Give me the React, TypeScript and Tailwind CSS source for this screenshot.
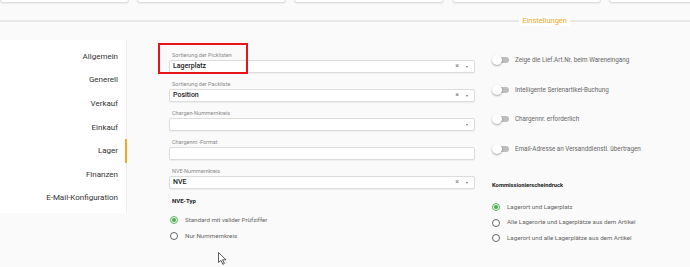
import React from "react";

const menu = ["Allgemein", "Generell", "Verkauf", "Einkauf", "Lager", "Finanzen", "E-Mail-Konfiguration"];

interface FieldProps {
  label: string;
  value?: string;
  clear?: boolean;
  caret?: boolean;
}

function Field({ label, value, clear, caret }: FieldProps) {
  return (
    <div className="flex flex-col">
      <div className="h-[8px] pl-[3px] text-[5.5px] leading-[8px] text-[#8a8a8a]">{label}</div>
      <div className="mt-px flex h-[13px] items-center rounded-[2px] border border-[#dcdcdc] bg-white pl-[3px] pr-[6px] shadow-[0_1px_1px_rgba(0,0,0,0.05)]">
        <span className="flex-1 text-[7px] font-medium leading-none text-[#222]">{value}</span>
        {clear && <span className="mr-[7px] text-[7px] leading-none text-[#777]">×</span>}
        {caret && (
          <span className="h-0 w-0 border-x-[1.5px] border-t-[2px] border-x-transparent border-t-[#777]" />
        )}
      </div>
    </div>
  );
}

function Radio({ label, checked }: { label: string; checked?: boolean }) {
  return (
    <div className="flex h-[10px] items-center">
      <span
        className={`flex h-[8px] w-[8px] items-center justify-center rounded-full border ${
          checked ? "border-[#66bb6a] bg-[#e8f5e9]" : "border-[#666] bg-white"
        }`}
      >
        {checked && <span className="h-[4px] w-[4px] rounded-full bg-[#4caf50]" />}
      </span>
      <span className="ml-[7px] text-[6.2px] leading-none text-[#666]">{label}</span>
    </div>
  );
}

function Toggle({ label }: { label: string }) {
  return (
    <div className="flex h-[12px] items-center">
      <span className="relative flex h-[10px] w-[17px] items-center">
        <span className="ml-[2px] h-[6px] w-[15px] rounded-full bg-[#bdbdbd]" />
        <span className="absolute left-0 top-0 h-[10px] w-[10px] rounded-full bg-white shadow-[0_1px_2px_rgba(0,0,0,0.35)]" />
      </span>
      <span className="ml-[6px] text-[6.3px] leading-none text-[#666]">{label}</span>
    </div>
  );
}

export default function App() {
  return (
    <div className="relative h-[267px] w-[690px] overflow-hidden bg-[#fafafa] font-['Roboto',sans-serif]">
      {/* top cards, mostly scrolled out */}
      <div className="-mt-[17px] flex gap-[8px]">
        {[129, 149, 150, 149, 150].map((w, i) => (
          <div
            key={i}
            style={{ width: w }}
            className="h-[20px] shrink-0 rounded-b-[3px] border border-[#dedede] bg-white shadow-[0_1px_1px_rgba(0,0,0,0.06)]"
          />
        ))}
      </div>

      {/* section divider */}
      <div className="mt-[16px] flex h-[4px] items-center">
        <div className="h-[2px] flex-1 bg-[#e8e8e8]" />
        <div className="bg-white px-[3px] text-[7.5px] leading-[10px] text-[#f5a623]">Einstellungen</div>
        <div className="h-[2px] w-[120px] bg-[#e8e8e8]" />
      </div>

      <div className="mt-[17px] flex">
        {/* sidebar */}
        <div className="w-[127px] shrink-0 self-start border-r border-[#eeeeee] bg-white pb-[3px] pt-[5px]">
          {menu.map((m) => (
            <div
              key={m}
              className={`-mr-px flex h-[23.6px] items-center justify-end pr-[7px] text-[8px] text-[#333] ${
                m === "Lager" ? "border-r-2 border-[#f5a623]" : "border-r-2 border-transparent"
              }`}
            >
              {m}
            </div>
          ))}
        </div>

        {/* form column */}
        <div className="ml-[42px] flex w-[306px] flex-col pt-[11px]">
          <div className="flex flex-col gap-[7px]">
            <Field label="Sortierung der Picklisten" value="Lagerplatz" clear caret />
            <Field label="Sortierung der Packliste" value="Position" clear caret />
            <Field label="Chargen-Nummernkreis" caret />
            <Field label="Chargennr.-Format" />
            <Field label="NVE-Nummernkreis" value="NVE" clear caret />
          </div>
          <div className="mt-[8px] h-[8px] pl-[3px] text-[6px] font-bold leading-[8px] text-[#222]">NVE-Typ</div>
          <div className="mt-[10px] pl-[1px]">
            <Radio label="Standard mit valider Prüfziffer" checked />
          </div>
          <div className="mt-[6px] pl-[1px]">
            <Radio label="Nur Nummernkreis" />
          </div>
        </div>

        {/* right column */}
        <div className="ml-[17px] flex flex-col pt-[14px]">
          <div className="flex flex-col gap-[17.7px]">
            <Toggle label="Zeige die Lief.Art.Nr. beim Wareneingang" />
            <Toggle label="Intelligente Serienartikel-Buchung" />
            <Toggle label="Chargennr. erforderlich" />
            <Toggle label="Email-Adresse an Versanddienstl. übertragen" />
          </div>
          <div className="mt-[26px] h-[8px] text-[5.8px] font-bold leading-[8px] text-[#222]">
            Kommissionierscheindruck
          </div>
          <div className="mt-[13px] flex flex-col gap-[5.5px]">
            <Radio label="Lagerort und Lagerplatz" checked />
            <Radio label="Alle Lagerorte und Lagerplätze aus dem Artikel" />
            <Radio label="Lagerort und alle Lagerplätze aus dem Artikel" />
          </div>
        </div>
      </div>

      {/* red annotation box */}
      <div className="absolute left-[158px] top-[43px] h-[31px] w-[90px] border-2 border-[#e8141b]" />

      {/* mouse cursor */}
      <svg className="absolute left-[218px] top-[252px]" width="9" height="13" viewBox="0 0 9 13">
        <path d="M0.5 0.5 L0.5 10.5 L3 8.3 L4.8 12.3 L6.3 11.6 L4.6 7.8 L8 7.8 Z" fill="white" stroke="#333" strokeWidth="0.8" strokeLinejoin="round" />
      </svg>
    </div>
  );
}
